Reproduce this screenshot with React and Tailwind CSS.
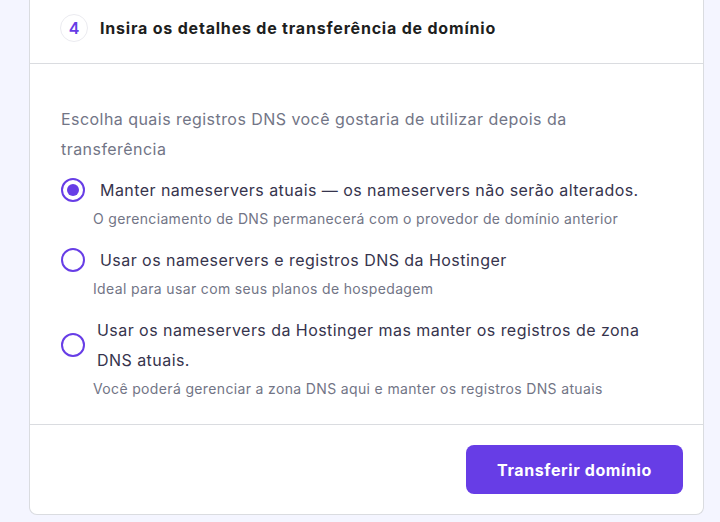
import { useState } from 'react'

const options = [
  {
    id: 'keep',
    label: 'Manter nameservers atuais — os nameservers não serão alterados.',
    hint: 'O gerenciamento de DNS permanecerá com o provedor de domínio anterior',
    labelClass: 'ml-[15px]',
  },
  {
    id: 'hostinger',
    label: 'Usar os nameservers e registros DNS da Hostinger',
    hint: 'Ideal para usar com seus planos de hospedagem',
    labelClass: 'ml-[15px]',
  },
  {
    id: 'mixed',
    label: 'Usar os nameservers da Hostinger mas manter os registros de zona DNS atuais.',
    hint: 'Você poderá gerenciar a zona DNS aqui e manter os registros DNS atuais',
    labelClass: 'ml-[12px] max-w-[560px]',
  },
]

export default function App() {
  const [selected, setSelected] = useState('keep')

  return (
    <div className="h-[522px] w-full overflow-hidden bg-[#f4f5ff] pl-[29px] pr-[16px] font-['Inter','Noto_Sans',sans-serif]">
      <div className="flex flex-col rounded-b-lg border-x border-b border-[#dadce0] bg-white">
        {/* Header */}
        <div className="flex items-center gap-[12px] border-b border-[#dadce0] pl-[30px] pt-[14px] pb-[21px]">
          <div className="flex h-[28px] w-[28px] items-center justify-center rounded-full border border-[#ebebf0] text-[16px] font-semibold text-[#673de6]">
            4
          </div>
          <h3 className="text-[16px] font-bold tracking-[0.8px] text-[#1d1e20]">
            Insira os detalhes de transferência de domínio
          </h3>
        </div>

        {/* Body */}
        <div className="flex flex-col pl-[31px] pr-[30px] pt-[40px] pb-[25px] tracking-[0.45px]">
          <p className="text-[16px] leading-[30px] text-[#727586]">
            Escolha quais registros DNS você gostaria de utilizar depois da transferência
          </p>
          <div className="mt-[11px] flex flex-col gap-[16px]">
            {options.map((o) => (
              <label key={o.id} className="flex cursor-pointer flex-col" onClick={() => setSelected(o.id)}>
                <div className="flex items-center">
                  <span className="flex h-[24px] w-[24px] shrink-0 items-center justify-center rounded-full border-2 border-[#673de6]">
                    {selected === o.id && <span className="h-[12px] w-[12px] rounded-full bg-[#673de6]" />}
                  </span>
                  <span className={`${o.labelClass} text-[16px] leading-[30px] text-[#36344d]`}>{o.label}</span>
                </div>
                <span className="ml-[32px] mt-[4px] text-[14px] leading-[20px] tracking-[0.35px] text-[#727586]">{o.hint}</span>
              </label>
            ))}
          </div>
        </div>

        {/* Footer */}
        <div className="flex justify-end border-t border-[#dadce0] p-[20px]">
          <button className="h-[49px] w-[217px] rounded-lg bg-[#673de6] text-[16px] font-bold tracking-[0.6px] text-white">
            Transferir domínio
          </button>
        </div>
      </div>
    </div>
  )
}
